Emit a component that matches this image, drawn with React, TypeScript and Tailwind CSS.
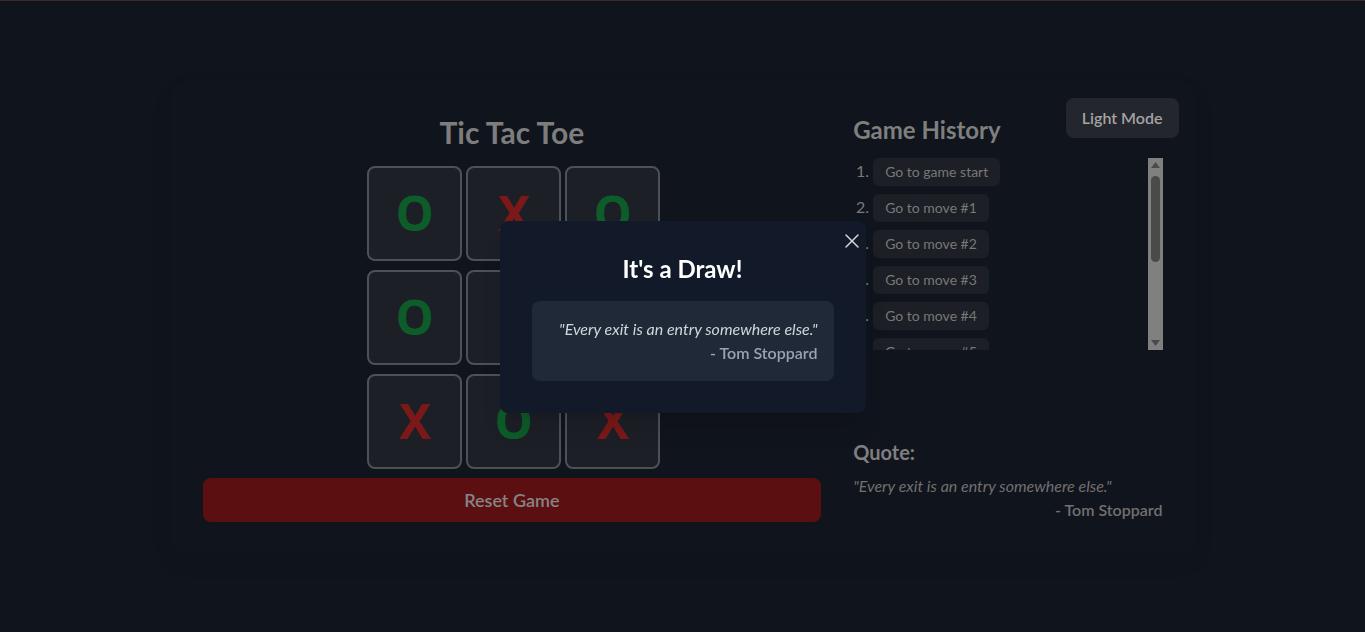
import { X } from 'lucide-react'

const board = ['O', 'X', 'O', 'O', '', '', 'X', 'O', 'X']
const moves = ['Go to game start', 'Go to move #1', 'Go to move #2', 'Go to move #3', 'Go to move #4', 'Go to move #5', 'Go to move #6']

const font = { fontFamily: '"Segoe UI", Lato, "Noto Sans", sans-serif' }

function Cell({ value }: { value: string }) {
  return (
    <button className="w-[95px] h-[95px] rounded-lg border-2 border-[#4d5058] bg-[#1c1f26] flex items-center justify-center text-5xl font-bold font-['Noto_Sans',sans-serif]">
      <span className={value === 'X' ? 'text-[#7b1818]' : 'text-[#0d5c29]'}>{value}</span>
    </button>
  )
}

export default function App() {
  return (
    <div style={font} className="relative min-h-screen border-t border-[#3a2c2a] bg-[#10141c] flex items-center justify-center pt-0.5">
      <div className="relative w-full max-w-5xl p-8 rounded-xl bg-[#10141c] shadow-[0_8px_24px_rgba(0,0,0,0.05)] flex gap-8">
        <button className="absolute top-4 right-4 px-4 py-2 rounded-lg bg-[#23262d] text-[#a3a3a3] font-semibold text-base">
          Light Mode
        </button>

        <div className="flex-[2] flex flex-col items-center">
          <h1 className="text-3xl font-bold text-[#7d7d7d] mb-4">Tic Tac Toe</h1>
          <div className="flex flex-col gap-[9px] pl-1">
            {[0, 1, 2].map((r) => (
              <div key={r} className="flex gap-1">
                {board.slice(r * 3, r * 3 + 3).map((v, i) => (
                  <Cell key={i} value={v} />
                ))}
              </div>
            ))}
          </div>
          <button className="mt-[9px] w-full py-2 rounded-lg bg-[#5c0f10] text-[#858585] text-lg font-semibold">
            Reset Game
          </button>
        </div>

        <div className="flex-1 flex flex-col justify-between">
          <div>
            <h2 className="text-2xl font-bold text-[#7f7f7f] mb-3">Game History</h2>
            <div className="flex h-48">
              <ol className="flex-1 list-decimal pl-5 overflow-hidden text-[#7a7a7a]">
                {moves.map((m) => (
                  <li key={m} className="mb-2">
                    <button className="px-3 py-1 rounded-md bg-[#1c1f26] text-sm text-[#787878]">{m}</button>
                  </li>
                ))}
              </ol>
              <div className="w-[15px] bg-[#808080] flex flex-col items-center justify-between py-[4px]">
                <svg width="9" height="6" viewBox="0 0 9 6"><path d="M4.5 0L9 6H0z" fill="#4a4a4a" /></svg>
                <div className="flex-1 w-full px-[3px] pt-[8px] pb-[4px] flex flex-col">
                  <div className="h-[86px] w-full rounded-full bg-[#4a4a4a]" />
                </div>
                <svg width="9" height="6" viewBox="0 0 9 6"><path d="M0 0H9L4.5 6z" fill="#4a4a4a" /></svg>
              </div>
            </div>
          </div>

          <div>
            <h3 className="text-xl font-bold text-[#7f7f7f] mb-2">Quote:</h3>
            <p className="italic text-[#707070]">"Every exit is an entry somewhere else."</p>
            <p className="text-right font-semibold text-[#707070]">- Tom Stoppard</p>
          </div>
        </div>
      </div>

      <div className="fixed inset-0 flex items-center justify-center pt-0.5">
        <div className="relative w-[366px] p-8 rounded-lg bg-[#121a2a] shadow-xl">
          <button className="absolute top-2 right-[2px] text-[#d4d4d4]">
            <X size={24} strokeWidth={1.5} />
          </button>
          <h2 className="text-2xl font-bold text-white text-center mb-4">It's a Draw!</h2>
          <div className="rounded-lg bg-[#1f2937] p-4 text-right">
            <p className="italic text-[#d1d5db]">"Every exit is an entry somewhere else."</p>
            <p className="font-semibold text-[#9ca3af]">- Tom Stoppard</p>
          </div>
        </div>
      </div>
    </div>
  )
}
